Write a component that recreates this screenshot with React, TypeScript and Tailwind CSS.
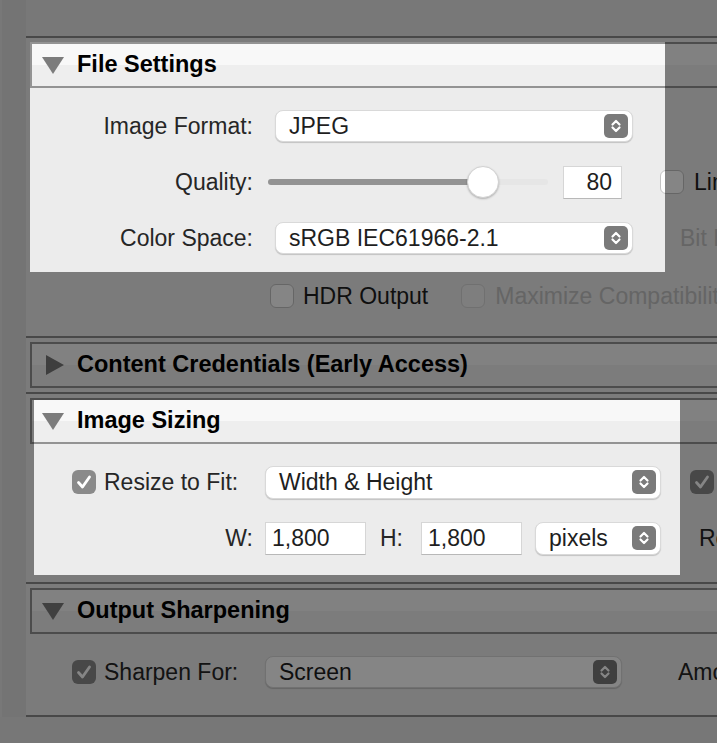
import clsx from "clsx";

function Stepper() {
  return (
    <span className="flex h-[24px] w-[24px] shrink-0 items-center justify-center rounded-[5px] bg-[#7a7a7a]">
      <svg viewBox="0 0 24 24" className="h-[24px] w-[24px]" fill="none" stroke="#fff" strokeWidth={2.2} strokeLinecap="round" strokeLinejoin="round">
        <path d="M8.5 10.5L12 7l3.5 3.5" />
        <path d="M8.5 13.5L12 17l3.5-3.5" />
      </svg>
    </span>
  );
}

function Popup({ value, className }: { value: string; className: string }) {
  return (
    <div
      className={clsx(
        "flex shrink-0 items-center justify-between rounded-[8px] border border-[#d9d9d9] bg-white pl-[13px] pr-[4px] shadow-[0_1px_1px_rgba(0,0,0,0.18)]",
        className
      )}
    >
      <span className="text-[23px] text-[#1e1e1e]">{value}</span>
      <Stepper />
    </div>
  );
}

function Checkbox({ checked, disabled, className }: { checked?: boolean; disabled?: boolean; className?: string }) {
  if (checked) {
    return (
      <span className={clsx("flex h-[24px] w-[24px] shrink-0 items-center justify-center rounded-[6px] bg-[#8a8a8a]", className)}>
        <svg viewBox="0 0 24 24" className="h-[24px] w-[24px]" fill="none" stroke="#fff" strokeWidth={2.8} strokeLinecap="round" strokeLinejoin="round">
          <path d="M6.5 12.5l4 4.5 7-10" />
        </svg>
      </span>
    );
  }
  return (
    <span
      className={clsx(
        "block h-[24px] w-[24px] shrink-0 rounded-[6px] border",
        disabled ? "border-[#d6d6d6] bg-[#f1f1f1]" : "border-[#c4c4c4] bg-white",
        className
      )}
    />
  );
}

function Field({ value, className }: { value: string; className: string }) {
  return (
    <div
      className={clsx(
        "flex h-[33px] shrink-0 items-center border border-[#d6d6d6] border-b-[#b8b8b8] bg-white text-[23px] text-[#1e1e1e]",
        className
      )}
    >
      {value}
    </div>
  );
}

function SectionHeader({ title, open }: { title: string; open: boolean }) {
  return (
    <>
      <div className="h-[2px] shrink-0 bg-[#8a8a8a]" />
      <div className="ml-[4px] mt-[4px] flex h-[46px] shrink-0 items-center border-y-2 border-l-2 border-[#939393] bg-[linear-gradient(#f8f8f8_50%,#eeeeee_50%)]">
        <div className="flex w-[45px] shrink-0">
          {open ? (
            <svg width="22" height="17" viewBox="0 0 22 17" className="ml-[10px]">
              <polygon points="0,0 22,0 11,17" fill="#7c7c7c" />
            </svg>
          ) : (
            <svg width="18" height="20" viewBox="0 0 18 20" className="ml-[14px]">
              <polygon points="0,0 18,10 0,20" fill="#777777" />
            </svg>
          )}
        </div>
        <span className="text-[23.5px] font-bold leading-none text-black">{title}</span>
      </div>
    </>
  );
}

export default function App() {
  return (
    <div className="relative h-[743px] w-[717px] overflow-hidden whitespace-nowrap bg-[#e5e5e5] font-['Liberation_Sans',Arial,sans-serif] text-[#262626]">
      <div className="flex h-[717px]">
        <div className="w-[26px] shrink-0 border-l-2 border-[#e6e6e6] bg-[#dfdfdf]" />
        <div className="flex min-w-0 flex-1 flex-col bg-[#ececec]">
          <div className="h-[36px] shrink-0 bg-[#e6e6e6]" />

          {/* File Settings */}
          <SectionHeader title="File Settings" open />
          <div className="flex h-[248px] shrink-0 flex-col pt-[10px] text-[23px]">
            <div className="flex h-[56px] items-center">
              <span className="w-[227px] shrink-0 text-right">Image Format:</span>
              <Popup value="JPEG" className="ml-[22px] h-[32px] w-[358px]" />
            </div>
            <div className="flex h-[56px] items-center">
              <span className="w-[227px] shrink-0 text-right">Quality:</span>
              <div className="relative ml-[15px] flex h-[32px] w-[280px] shrink-0 items-center">
                <div className="h-[6px] w-full rounded-full bg-[#e6e6e6]">
                  <div className="h-full w-[215px] rounded-full bg-[#939393]" />
                </div>
                <span className="absolute left-[199px] top-0 h-[32px] w-[32px] rounded-full border border-[#d2d2d2] bg-white shadow-[0_1px_2px_rgba(0,0,0,0.25)]" />
              </div>
              <Field value="80" className="ml-[15px] w-[59px] justify-end pr-[9px]" />
              <Checkbox className="ml-[38px]" />
              <span className="ml-[10px] shrink-0 text-[#1e1e1e]">Limit File Size To:</span>
            </div>
            <div className="flex h-[56px] items-center">
              <span className="w-[227px] shrink-0 text-right">Color Space:</span>
              <Popup value="sRGB IEC61966-2.1" className="ml-[22px] h-[32px] w-[358px]" />
              <span className="ml-[47px] shrink-0 text-[#c2c2c2]">Bit Depth:</span>
            </div>
            <div className="flex h-[60px] items-center pl-[244px]">
              <Checkbox />
              <span className="ml-[9px] shrink-0 text-[#1e1e1e]">HDR Output</span>
              <Checkbox disabled className="ml-[33px]" />
              <span className="ml-[10px] shrink-0 text-[#c2c2c2]">Maximize Compatibility</span>
            </div>
          </div>

          {/* Content Credentials */}
          <SectionHeader title="Content Credentials (Early Access)" open={false} />
          <div className="h-[4px] shrink-0" />

          {/* Image Sizing */}
          <SectionHeader title="Image Sizing" open />
          <div className="flex h-[138px] shrink-0 flex-col pt-[10px] text-[23px]">
            <div className="flex h-[56px] items-center">
              <div className="flex w-[239px] shrink-0 items-center pl-[46px]">
                <Checkbox checked />
                <span className="ml-[8px]">Resize to Fit:</span>
              </div>
              <Popup value="Width & Height" className="h-[33px] w-[396px]" />
              <Checkbox checked className="ml-[29px]" />
              <span className="ml-[9px] shrink-0">Don't Enlarge</span>
            </div>
            <div className="flex h-[56px] items-center">
              <span className="w-[227px] shrink-0 text-right">W:</span>
              <Field value="1,800" className="ml-[12px] w-[101px] pl-[6px]" />
              <span className="ml-[14px] shrink-0">H:</span>
              <Field value="1,800" className="ml-[18px] w-[101px] pl-[6px]" />
              <Popup value="pixels" className="ml-[13px] h-[33px] w-[126px]" />
              <span className="ml-[38px] shrink-0">Resolution:</span>
            </div>
          </div>

          {/* Output Sharpening */}
          <SectionHeader title="Output Sharpening" open />
          <div className="flex h-[81px] shrink-0 flex-col pt-[10px] text-[23px]">
            <div className="flex h-[56px] items-center">
              <div className="flex w-[239px] shrink-0 items-center pl-[46px]">
                <Checkbox checked />
                <span className="ml-[8px]">Sharpen For:</span>
              </div>
              <Popup value="Screen" className="h-[32px] w-[357px]" />
              <span className="ml-[56px] shrink-0">Amount:</span>
            </div>
          </div>
          <div className="h-[2px] shrink-0 bg-[#8a8a8a]" />
        </div>
      </div>

      {/* dim overlay with two spotlight cut-outs */}
      <div className="pointer-events-none absolute inset-0 bg-black/[0.48] [clip-path:polygon(evenodd,0_0,100%_0,100%_100%,0_100%,0_0,30px_42px,665px_42px,665px_272px,30px_272px,30px_42px,0_0,34px_400px,680px_400px,680px_575px,34px_575px,34px_400px,0_0)]" />
    </div>
  );
}
